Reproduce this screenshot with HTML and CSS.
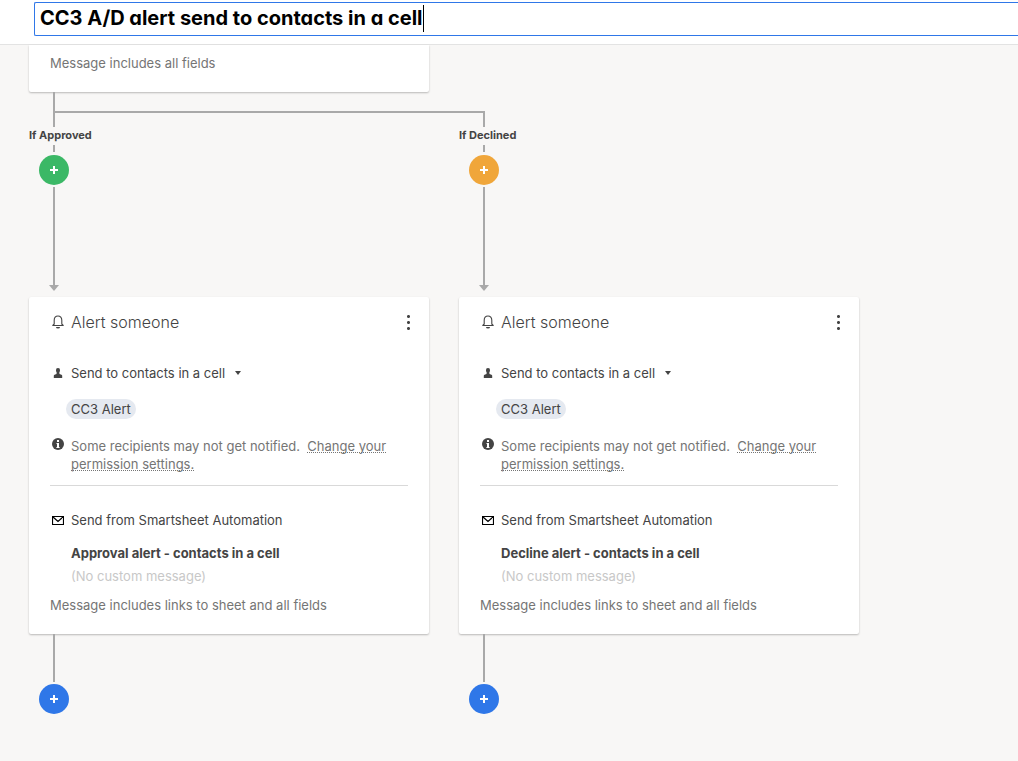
FILE: index.html
```
<!DOCTYPE html>
<html lang="en">

<head>
  <meta charset="UTF-8">
  <meta name="viewport" content="width=device-width, initial-scale=1.0">
  <title>CC3 A/D alert send to contacts in a cell</title>
  <link rel="stylesheet" href="styles.css">
</head>

<body>
  <!-- shared icons -->
  <svg class="sprite" aria-hidden="true">
    <symbol id="bell" viewBox="0 0 12 14">
      <path d="M.8 10.5h10.4L9.8 9V5.2C9.8 2.700 8.300 1 6 1S2.200 2.700 2.200 5.200V9z" fill="none" stroke="#444" stroke-width="1.100" stroke-linejoin="round" />
      <path d="M4 12h4a2 1.500 0 0 1-4 0z" fill="#444" />
    </symbol>
    <symbol id="person" viewBox="0 0 12 12">
      <path d="M6 1a2 2 0 0 1 2 2.200C8 4.300 7.500 5 7.300 5.600L7.500 7l2 .7c.5.2.7.6.7 1.100V11H1.800V8.800c0-.5.2-.9.7-1.100l2-.7.2-1.400C4.500 5 4 4.300 4 3.200A2 2 0 0 1 6 1z" fill="#444" />
    </symbol>
    <symbol id="info" viewBox="0 0 12 12">
      <circle cx="6" cy="6" r="6" fill="#444" />
      <path d="M5 2h2v2H5zM4.500 5H7v4h.6v1H4.400V9H5V6h-.5z" fill="#fff" />
    </symbol>
    <symbol id="mail" viewBox="0 0 12 9">
      <path d="M.5.500h11v8H.5zM1 1l5 4.500L11 1" fill="none" stroke="#000" stroke-width="1.200" />
    </symbol>
    <symbol id="plus" viewBox="0 0 8 8">
      <path d="M3 0h2v3h3v2H5v3H3V5H0V3h3z" fill="#fff" />
    </symbol>
    <symbol id="dots" viewBox="0 0 3 15">
      <path d="M1 0h1v1h1v1H2v1H1V2H0V1h1zM1 6h1v1h1v1H2v1H1V8H0V7h1zM1 12h1v1h1v1H2v1H1v-1H0v-1h1z" fill="#444" />
      <path d="M0 0h3v3H0zM0 6h3v3H0zM0 12h3v3H0z" fill="#444" fill-opacity=".6" />
    </symbol>
    <symbol id="caret" viewBox="0 0 6 4">
      <path d="M0 0h6L3 4z" fill="#444" />
    </symbol>
    <symbol id="arrow" viewBox="0 0 10 6">
      <path d="M0 0h10L5 6z" fill="#a9a9a9" />
    </symbol>
  </svg>

  <header class="topbar">
    <div class="title_box">
      <input class="title_input" type="text" aria-label="Workflow name" value="CC3 A/D alert send to contacts in a cell">
      <span class="cursor"></span>
    </div>
  </header>

  <main class="workflow">
    <section class="card card_top">
      <p class="includes">Message includes all fields</p>
    </section>
    <div class="stem stem_split"></div>

    <div class="branches">
      <div class="branch">
        <div class="joint"></div>
        <h2 class="branch_label">If Approved</h2>
        <div class="stem stem_short"></div>
        <button class="add green" type="button" aria-label="Add step if approved"><svg width="8" height="8"><use href="#plus" /></svg></button>
        <div class="stem stem_long"></div>
        <svg class="arrow" width="10" height="6"><use href="#arrow" /></svg>

        <section class="card">
          <div class="card_head">
            <svg class="icon" width="12" height="14"><use href="#bell" /></svg>
            <h3>Alert someone</h3>
            <button class="more" type="button" aria-label="More options"><svg width="3" height="15"><use href="#dots" /></svg></button>
          </div>
          <button class="row send_to" type="button">
            <svg class="icon" width="12" height="12"><use href="#person" /></svg>
            <span>Send to contacts in a cell</span>
            <svg class="caret" width="6" height="4"><use href="#caret" /></svg>
          </button>
          <span class="chip">CC3 Alert</span>
          <div class="notice">
            <svg class="icon" width="12" height="12"><use href="#info" /></svg>
            <p>Some recipients may not get notified.&nbsp; <a href="#">Change your permission settings.</a></p>
          </div>
          <div class="row send_from">
            <svg class="icon" width="12" height="9"><use href="#mail" /></svg>
            <span>Send from Smartsheet Automation</span>
          </div>
          <p class="subject">Approval alert - contacts in a cell</p>
          <p class="message">(No custom message)</p>
          <p class="includes">Message includes links to sheet and all fields</p>
        </section>

        <div class="stem stem_end"></div>
        <button class="add blue" type="button" aria-label="Add step"><svg width="8" height="8"><use href="#plus" /></svg></button>
      </div>

      <div class="branch">
        <div class="joint"></div>
        <h2 class="branch_label">If Declined</h2>
        <div class="stem stem_short"></div>
        <button class="add orange" type="button" aria-label="Add step if declined"><svg width="8" height="8"><use href="#plus" /></svg></button>
        <div class="stem stem_long"></div>
        <svg class="arrow" width="10" height="6"><use href="#arrow" /></svg>

        <section class="card">
          <div class="card_head">
            <svg class="icon" width="12" height="14"><use href="#bell" /></svg>
            <h3>Alert someone</h3>
            <button class="more" type="button" aria-label="More options"><svg width="3" height="15"><use href="#dots" /></svg></button>
          </div>
          <button class="row send_to" type="button">
            <svg class="icon" width="12" height="12"><use href="#person" /></svg>
            <span>Send to contacts in a cell</span>
            <svg class="caret" width="6" height="4"><use href="#caret" /></svg>
          </button>
          <span class="chip">CC3 Alert</span>
          <div class="notice">
            <svg class="icon" width="12" height="12"><use href="#info" /></svg>
            <p>Some recipients may not get notified.&nbsp; <a href="#">Change your permission settings.</a></p>
          </div>
          <div class="row send_from">
            <svg class="icon" width="12" height="9"><use href="#mail" /></svg>
            <span>Send from Smartsheet Automation</span>
          </div>
          <p class="subject">Decline alert - contacts in a cell</p>
          <p class="message">(No custom message)</p>
          <p class="includes">Message includes links to sheet and all fields</p>
        </section>

        <div class="stem stem_end"></div>
        <button class="add blue" type="button" aria-label="Add step"><svg width="8" height="8"><use href="#plus" /></svg></button>
      </div>
    </div>
  </main>
</body>

</html>
```
FILE: styles.css
```
* {
  box-sizing: border-box;
}

body {
  margin: 0;
  background: #f8f7f6;
  color: #444;
  font-family: Inter, "Liberation Sans", sans-serif;
  font-size: 13px;
  line-height: 18px;
}

h2,
h3,
p {
  margin: 0;
}

button {
  border: none;
  padding: 0;
  background: none;
  color: inherit;
  font: inherit;
  cursor: pointer;
}

svg {
  display: block;
  flex: none;
}

.sprite {
  display: none;
}

/* header */
.topbar {
  height: 45px;
  padding: 2px 0 0 34px;
  background: #fff;
  border-bottom: 1px solid #e3e3e3;
}

.title_box {
  display: flex;
  align-items: flex-start;
  height: 34px;
  padding: 2px 0 0 5px;
  border: 1px solid #2f77e8;
  border-right: none;
  border-radius: 2px 0 0 2px;
}

.title_input {
  field-sizing: content;
  height: 26px;
  padding: 0;
  border: none;
  outline: none;
  background: none;
  color: #000;
  font-family: Inter, sans-serif;
  font-size: 20px;
  font-weight: 700;
  /* single-storey a */
  font-feature-settings: "cv11";
}

.cursor {
  width: 1px;
  height: 27px;
  background: #000;
}

/* workflow */
.workflow {
  padding: 0 29px 40px;
}

.branches {
  display: grid;
  grid-template-columns: repeat(2, minmax(0, 400px));
  gap: 30px;
}

.branch {
  display: flex;
  flex-direction: column;
  align-items: flex-start;
}

.stem {
  width: 2px;
  margin-left: 24px;
  background: #a9a9a9;
}

.stem_split {
  height: 19px;
}

.stem_short {
  height: 7px;
}

.stem_long {
  height: 98px;
  margin-top: 2px;
}

.stem_end {
  height: 48px;
}

.joint {
  width: 2px;
  height: 16px;
  margin-left: 24px;
  border-left: 2px solid #a9a9a9;
}

/* the first joint reaches over to the second branch */
.branch:first-child .joint {
  width: calc(100% + 32px);
  border-top: 2px solid #a9a9a9;
}

.branch_label {
  margin-bottom: 2px;
  font-size: 11px;
  font-weight: 700;
  line-height: 16px;
}

.add {
  display: flex;
  align-items: center;
  justify-content: center;
  width: 30px;
  height: 30px;
  margin: 3px 0 0 10px;
  border-radius: 50%;
}

.stem_end + .add {
  margin-top: 2px;
}

.green {
  background: #3bb866;
}

.orange {
  background: #f0a63a;
}

.blue {
  background: #2f77e8;
}

.arrow {
  margin: 0 0 6px 20px;
}

/* cards */
.card {
  width: 100%;
  padding: 16px 21px 20px;
  background: #fff;
  border-radius: 2px;
  box-shadow: 0 1px 2px rgba(0, 0, 0, 0.25);
}

.card_top {
  max-width: 400px;
  padding-top: 9px;
  border-radius: 0 0 2px 2px;
}

.icon {
  margin: 0 7px 0 2px;
}

.card_head {
  display: flex;
  align-items: center;
  margin-right: -2px;
}

.card_head h3 {
  flex: 1;
  font-size: 16px;
  font-weight: 300;
}

.row {
  display: flex;
  align-items: center;
}

.send_to {
  margin-top: 33px;
}

.caret {
  margin-left: 10px;
}

.chip {
  display: block;
  width: fit-content;
  margin: 17px 0 18px 16px;
  padding: 0 5px;
  border-radius: 10px;
  background: #e5e9f0;
  line-height: 20px;
}

.notice {
  display: flex;
  padding-bottom: 12px;
  border-bottom: 1px solid #d9d9d9;
  color: #757575;
}

.notice .icon {
  margin-top: 1px;
}

.notice a {
  color: inherit;
  text-decoration: underline dotted 1px;
  text-decoration-skip-ink: none;
  text-underline-offset: 1px;
}

.send_from {
  margin-top: 25px;
}

.subject {
  margin: 15px 0 5px 21px;
  font-weight: 700;
}

.message {
  margin: 0 0 11px 21px;
  color: #c8c8c8;
}

.includes {
  color: #757575;
}
```
